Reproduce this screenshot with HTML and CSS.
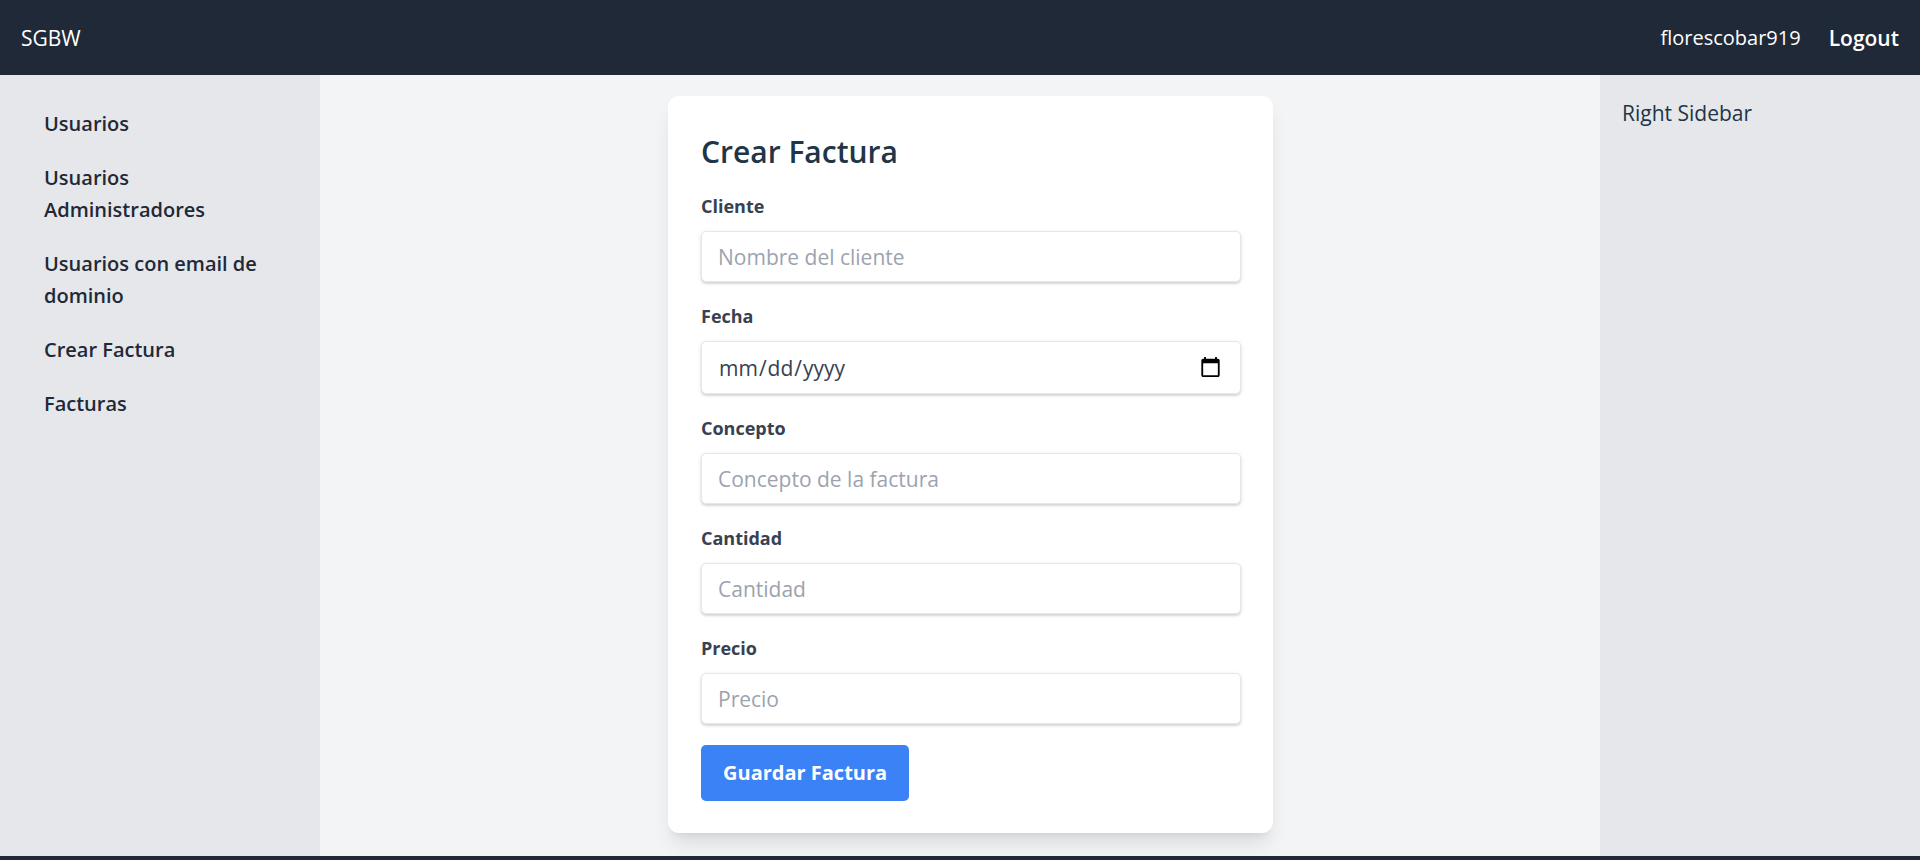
FILE: index.html
```html
<!DOCTYPE html>
<html lang="en">
<head>
<meta charset="utf-8">
<meta name="viewport" content="width=device-width, initial-scale=1">
<title>Crear Factura</title>
<link rel="stylesheet" href="styles.css">
</head>
<body>
<header class="topbar">
  <span class="brand">SGBW</span>
  <div class="account">
    <span>florescobar919</span>
    <button class="logout" type="button">Logout</button>
  </div>
</header>
<div class="layout">
  <nav class="sidebar">
    <ul class="menu">
      <li><a class="menu-link" href="#">Usuarios</a></li>
      <li><a class="menu-link" href="#">Usuarios Administradores</a></li>
      <li><a class="menu-link" href="#">Usuarios con email de dominio</a></li>
      <li><a class="menu-link" href="#">Crear Factura</a></li>
      <li><a class="menu-link" href="#">Facturas</a></li>
    </ul>
  </nav>
  <main class="content">
    <form class="card">
      <h1 class="title">Crear Factura</h1>
      <div class="fields">
        <div class="field">
          <label class="label" for="cliente">Cliente</label>
          <input class="input" id="cliente" type="text" placeholder="Nombre del cliente">
        </div>
        <div class="field">
          <label class="label" for="fecha">Fecha</label>
          <input class="input input-date" id="fecha" type="date">
        </div>
        <div class="field">
          <label class="label" for="concepto">Concepto</label>
          <input class="input" id="concepto" type="text" placeholder="Concepto de la factura">
        </div>
        <div class="field">
          <label class="label" for="cantidad">Cantidad</label>
          <input class="input" id="cantidad" type="number" placeholder="Cantidad">
        </div>
        <div class="field">
          <label class="label" for="precio">Precio</label>
          <input class="input" id="precio" type="number" placeholder="Precio">
        </div>
        <button class="save" type="submit">Guardar Factura</button>
      </div>
    </form>
  </main>
  <aside class="aside">Right Sidebar</aside>
</div>
<footer class="footer"></footer>
</body>
</html>
```
FILE: styles.css
```css
*, *::before, *::after { box-sizing: border-box; }

body {
  margin: 0;
  min-height: 100vh;
  display: flex;
  flex-direction: column;
  font-family: "Segoe UI", "Open Sans", "Noto Sans", sans-serif;
  font-size: 20px;
  line-height: 32px;
  color: #213547;
  background: #f3f4f6;
}

button, input { font: inherit; }

.topbar {
  display: flex;
  justify-content: space-between;
  align-items: center;
  min-height: 75px;
  padding: 21px;
  color: #fff;
  background: #1f2937;
}

.brand { font-size: 21px; }

.account { display: flex; gap: 28px; }

.logout {
  padding: 0;
  border: 0;
  color: inherit;
  background: none;
  font-weight: 600;
  font-size: 21px;
  cursor: pointer;
}

.layout {
  flex: 1;
  display: grid;
  grid-template-columns: 1fr 4fr 1fr;
}

.sidebar, .aside {
  padding: 22px;
  background: #e5e7eb;
}

.aside { font-size: 21px; }

.menu { margin: 0; padding: 0; list-style: none; }

.menu-link {
  display: block;
  padding: 11px 22px;
  font-weight: 600;
  color: #1f2937;
  text-decoration: none;
}

.content {
  display: flex;
  justify-content: center;
  align-items: flex-start;
  padding: 21px 21px 21px 42px;
}

.card {
  width: 100%;
  max-width: 605px;
  padding: 34px 32px 32px 33px;
  border-radius: 11px;
  background: #fff;
  box-shadow: 0 14px 20px -4px rgba(0, 0, 0, .1), 0 6px 8px -6px rgba(0, 0, 0, .1);
}

.title {
  margin: 0 0 20px;
  font-size: 30px;
  line-height: 43px;
  font-weight: 600;
}

.fields { display: flex; flex-direction: column; gap: 21px; }

.field { display: flex; flex-direction: column; gap: 11px; }

.label {
  font-size: 18px;
  line-height: 27px;
  font-weight: 700;
  color: #374151;
}

.input {
  width: 100%;
  height: 51px;
  padding: 0 16px;
  border: 1px solid #e5e7eb;
  border-radius: 5px;
  font-size: 21px;
  color: #374151;
  background: #fff;
  box-shadow: 0 1px 4px rgba(0, 0, 0, .1), 0 2px 2px rgba(0, 0, 0, .1);
}

.input::placeholder { color: #9ca3af; opacity: 1; }

.input-date { height: 53px; }

.input-date::-webkit-calendar-picker-indicator {
  width: 23px;
  height: 23px;
}

.save {
  align-self: flex-start;
  padding: 12px 22px;
  border: 0;
  border-radius: 5px;
  color: #fff;
  background: #3b82f6;
  font-weight: 700;
  cursor: pointer;
}

.footer { flex: none; height: 4px; background: #1f2937; }
```
